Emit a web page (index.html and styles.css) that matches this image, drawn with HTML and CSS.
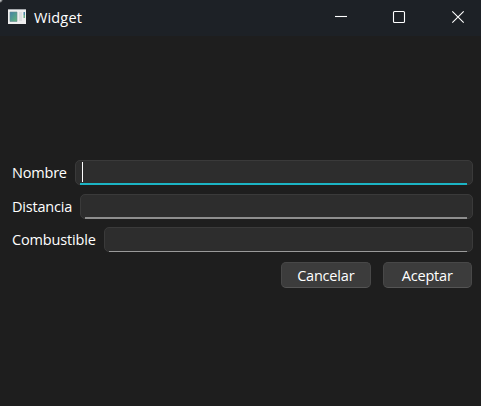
FILE: index.html
```html
<!DOCTYPE html>
<html lang="es">
<head>
<meta charset="utf-8">
<title>Widget</title>
<link rel="stylesheet" href="styles.css">
</head>
<body>
<div class="window">
  <header class="titlebar">
    <svg class="app-icon" width="18" height="15" viewBox="0 0 18 15">
      <defs><linearGradient id="pane" x1="0" y1="0" x2="1" y2="1"><stop offset="0" stop-color="#4382a8"/><stop offset="1" stop-color="#62b578"/></linearGradient></defs>
      <path fill="#eeeeee" d="M0 0h18v15H0z"/>
      <path fill="#a5a9ad" d="M0 0h18v1H0z"/>
      <path fill="url(#pane)" stroke="#658b91" stroke-width=".6" d="M2 3h7v9.500H2z"/>
      <path fill="#dcdedf" d="M11 3h3v9h-3z"/>
      <path fill="#4c87a5" d="M15.500 3h1.500v3h-1.500z"/>
      <path fill="#69af85" d="M15.500 6h1.500v3h-1.500z"/>
    </svg>
    <span class="title">Widget</span>
    <div class="controls">
      <svg width="58" height="36" viewBox="0 0 58 36"><path class="line" d="M15 16.500h12"/></svg>
      <svg width="58" height="36" viewBox="0 0 58 36"><rect class="line" x="15.500" y="11.500" width="11" height="11" rx="1"/></svg>
      <svg width="45" height="36" viewBox="0 0 45 36"><path class="line" d="M16.300 11.300l11.400 11.400M27.700 11.300L16.300 22.700"/></svg>
    </div>
  </header>
  <main class="form">
    <div class="row"><span class="label nombre">Nombre</span><div class="field focused"><span class="caret"></span></div></div>
    <div class="row"><span class="label distancia">Distancia</span><div class="field"></div></div>
    <div class="row"><span class="label combustible">Combustible</span><div class="field thin"></div></div>
    <div class="actions"><button class="button">Cancelar</button><button class="button accept">Aceptar</button></div>
  </main>
</div>
</body>
</html>
```
FILE: styles.css
```css
* { box-sizing: border-box; }
body { margin: 0; background: #1e1e1e; color: #fff; font: 14.500px/20px "Open Sans", "Noto Sans", sans-serif; letter-spacing: -.2px; }
.window { height: 406px; overflow: hidden; background: #1e1e1e; }
.titlebar { height: 36px; display: flex; align-items: center; background: radial-gradient(circle at 0 0, #b8babb 1px, transparent 3px), #1d2126; padding-left: 8px; }
.app-icon { margin-top: -3px; }
.title { margin-left: 8px; letter-spacing: .15px; }
.controls { display: flex; margin-left: auto; }
.line { fill: none; stroke: #fff; stroke-width: 1.1; }
.form { padding: 124px 8px 0 12px; display: flex; flex-direction: column; }
.row { display: flex; height: 25px; margin-bottom: 8.500px; }
.label { padding-top: 3px; white-space: nowrap; flex: none; }
.nombre { width: 63px; }
.distancia { width: 68px; }
.combustible { width: 92px; letter-spacing: -.15px; }
.field { flex: 1; position: relative; background: #2d2d2d; border: 1px solid #3a3a3a; border-radius: 5px; }
.field::after { content: ""; position: absolute; left: 4px; right: 5px; bottom: -1px; height: 1.500px; background: #8e8e8e; }
.focused::after { height: 2px; background: #1cb4c4; }
.thin::after { height: 1px; background: #9a9a9a; }
.caret { display: block; width: 1px; height: 20px; margin: 1px 0 0 6px; background: #fff; }
.actions { display: flex; justify-content: flex-end; gap: 12px; padding-right: 1px; margin-top: 1.500px; }
.button { width: 89.500px; height: 26px; padding: 2px 0 0; border: 1px solid #484848; border-bottom-color: #555; border-radius: 5px; background: #3c3c3c; color: #fff; font: inherit; letter-spacing: -.2px; line-height: 20px; }
```
